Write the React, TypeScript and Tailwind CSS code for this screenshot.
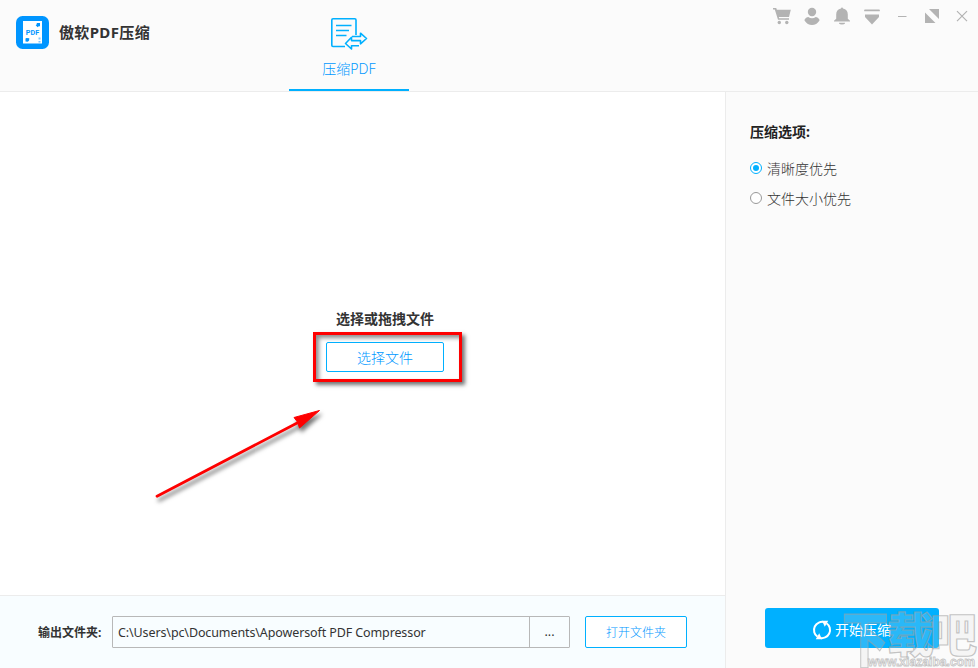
import { useState } from 'react';
import { clsx } from 'clsx';

const OUTPUT_DIR = 'C:\\Users\\pc\\Documents\\Apowersoft PDF Compressor';

const OPTIONS = [
  { id: 'quality', label: '清晰度优先' },
  { id: 'size', label: '文件大小优先' },
];

function Logo() {
  return (
    <svg width="33" height="33" viewBox="0 0 33 33" className="shrink-0">
      <rect width="33" height="33" rx="6.5" fill="#0095ff" />
      <path d="M7 5h19v22.500H7z" fill="#fff" />
      <path d="M20.500 7h3.500v3.500l-1-.5-1.300 1.200-2-1.900 1.300-1.300z" fill="#0095ff" />
      <path d="M9.500 25.500v-3l1-.5 2.800.2-.2 2.300-1.300 1.300z" fill="#0095ff" />
      <path d="M22.500 21.500h2v2h-2zM22.500 25h2v1.500h-2z" fill="#7cc8ff" />
      <text x="16.500" y="19" textAnchor="middle" fontSize="7.200" textLength="13.500" fontWeight="700" fontFamily="Roboto, sans-serif" fill="#0095ff">
        PDF
      </text>
    </svg>
  );
}

function CompressIcon() {
  return (
    <svg width="38" height="34" viewBox="0 0 38 34" fill="none" stroke="#00b0ff" strokeWidth="1.600">
      <path d="M15 29.500H3a1.200 1.200 0 0 1-1.200-1.200V3A1.200 1.200 0 0 1 3 1.800h21.800A1.200 1.200 0 0 1 26 3v15" />
      <path d="M6 8.500h15.500M6 13.500h13M6 18.500h10.500" />
      <path d="M22 19.500h8.500V16.200l6 5.300-6 5.300v-3.200H21.500v-3.400l-6 6.300 6 5.500v-3.200h7.500" strokeLinejoin="round" />
    </svg>
  );
}

function WindowControls() {
  return (
    <div className="flex gap-[10px] pt-[6px] pr-[6px] text-[#b3b3b3]">
      <svg width="20" height="20" viewBox="0 0 20 20" fill="currentColor">
        <path d="M1 2h3.200l.7 1.800H18.800L17 11H6.800l.4 1.300H17v1.500H6L2.800 3.600H1z" />
        <circle cx="7.300" cy="16.500" r="1.700" />
        <circle cx="14.800" cy="16.500" r="1.700" />
      </svg>
      <svg width="20" height="20" viewBox="0 0 20 20" fill="currentColor">
        <circle cx="10" cy="6" r="4.200" />
        <path d="M6.200 11Q10 13.500 13.800 11 17.500 12 17.500 14.500 14.500 19 10 19T2.500 14.500Q2.500 12 6.200 11z" />
      </svg>
      <svg width="20" height="20" viewBox="0 0 20 20" fill="currentColor">
        <path d="M9 2.500a1 1 0 0 1 2 0q4.800.8 4.800 6v4.200l2.200 2v.8H2v-.8l2.200-2V8.500q0-5.200 4.800-6zM7 16.800h6v.8q-.7 1-3 1t-3-1z" />
      </svg>
      <svg width="20" height="20" viewBox="0 0 20 20" fill="currentColor">
        <path d="M3 3.500h14a.9.9 0 0 1 0 1.800H3a.9.9 0 0 1 0-1.800zM3 8.500h14v2.500l-7 7.500L3 11z" />
      </svg>
      <svg width="20" height="20" viewBox="0 0 20 20" fill="currentColor">
        <path d="M6 10h8.500v1H6z" />
      </svg>
      <svg width="20" height="20" viewBox="0 0 20 20" fill="currentColor">
        <path d="M7 3h10v10zM3 6.500V17h10.500z" />
      </svg>
      <svg width="20" height="20" viewBox="0 0 20 20" fill="none" stroke="currentColor" strokeWidth="1.200">
        <path d="M5 5.200l10 10M15 5.200l-10 10" />
      </svg>
    </div>
  );
}

function RefreshIcon() {
  return (
    <svg width="20" height="20" viewBox="0 0 20 20" fill="none" stroke="#fff" strokeWidth="2">
      <path d="M5.500 16.800A8.200 8.200 0 0 1 12.500 2.200" />
      <path d="M14.500 3.200A8.200 8.200 0 0 1 7.500 17.800" />
      <path d="M10 .7h6.200l-3.400 6zM10 19.300H3.800l3.400-6z" fill="#fff" stroke="none" />
    </svg>
  );
}

// Hand-drawn pointer towards the file button
function Arrow() {
  return (
    <svg
      width="180"
      height="104"
      viewBox="150 404 180 104"
      className="pointer-events-none absolute left-[150px] top-[404px] drop-shadow-[2px_4px_2px_rgba(0,0,0,0.55)]"
    >
      <path d="M157 496.200L300 421.500" stroke="#fe0000" strokeWidth="2.800" strokeLinecap="round" />
      <path d="M319.500 410.500L294 417.500l3.500 4.500 2 6z" fill="#fe0000" stroke="#fe0000" strokeLinejoin="round" />
    </svg>
  );
}

function Watermark() {
  return (
    <svg width="138" height="62" viewBox="840 606 138 62" className="pointer-events-none absolute bottom-0 right-0">
      <g fill="#dcdcdc" fillOpacity="0.2" stroke="#a0a0a0" strokeOpacity="0.6">
        <g strokeWidth="1.200" fontWeight="900" fontFamily="'Noto Sans CJK SC', sans-serif">
          <text transform="translate(842 662) scale(0.78 1)" fontSize="60">
            下
          </text>
          <text x="887" y="652" fontSize="47">
            载
          </text>
          <text x="930" y="652" fontSize="47">
            吧
          </text>
        </g>
        <text x="868" y="666" fontSize="13" textLength="107" lengthAdjust="spacingAndGlyphs" strokeWidth="0.900" fontWeight="700" fontFamily="'Liberation Sans', sans-serif" fill="#fff" fillOpacity="0.7">
          www.xiazaiba.com
        </text>
      </g>
    </svg>
  );
}

export default function App() {
  const [mode, setMode] = useState('quality');

  return (
    <div className="relative flex h-[668px] w-[978px] flex-col overflow-hidden bg-[#fbfbfb] font-['Noto_Sans','Noto_Sans_CJK_SC',sans-serif] text-sm text-[#333]">
      {/* Title bar */}
      <header className="flex h-[92px] shrink-0 border-b border-[#ececec]">
        <div className="flex w-[289px] items-start gap-[10px] pl-4 pt-4">
          <Logo />
          <h1 className="text-[15px] font-bold leading-[33px] tracking-[0.35px]">傲软PDF压缩</h1>
        </div>
        <button className="flex h-[91px] w-[120px] flex-col items-center border-b-2 border-[#00b0ff] pt-[17px] font-light text-[#0098ff]">
          <CompressIcon />
          <span className="mt-2 leading-5">压缩PDF</span>
        </button>
        <div className="ml-auto">
          <WindowControls />
        </div>
      </header>

      <div className="flex min-h-0 flex-1">
        <div className="flex w-[725px] flex-col">
          {/* Drop area */}
          <main className="flex flex-1 flex-col items-center bg-white pl-[45px] pt-[217px]">
            <p className="font-bold leading-5">选择或拖拽文件</p>
            <div className="relative mt-[13px]">
              <button className="block h-[30px] w-[118px] rounded-[2px] border border-[#00b0ff] bg-white pt-px font-light text-[#0098ff]">
                选择文件
              </button>
              <span className="pointer-events-none absolute -bottom-[10px] -left-[13px] -right-[18px] -top-[10px] border-[3px] border-[#fe0000] shadow-[3px_3px_4px_rgba(0,0,0,0.55),inset_3px_3px_4px_rgba(0,0,0,0.45)]" />
            </div>
          </main>

          {/* Output folder */}
          <footer className="flex h-[73px] shrink-0 items-center border-t border-[#ececec] bg-[#f8fdff] pl-[38px] text-xs">
            <span className="w-[74px] pt-px font-bold">输出文件夹:</span>
            <div className="flex h-8 w-[458px] rounded-[1px] border border-[#b8b8b8] text-[12.5px]">
              <span className="flex-1 whitespace-nowrap pl-[5px] leading-[32px] tracking-[-0.11px]">{OUTPUT_DIR}</span>
              <button className="w-10 border-l border-[#b8b8b8]">...</button>
            </div>
            <button className="ml-[15px] h-8 w-[102px] rounded-[2px] border border-[#00b0ff] bg-white pt-px font-light text-[#0098ff]">
              打开文件夹
            </button>
          </footer>
        </div>

        {/* Options */}
        <aside className="flex flex-1 flex-col border-l border-[#ececec] pl-6">
          <h2 className="mt-[30px] font-bold leading-5 text-[#222]">压缩选项:</h2>
          <div className="mt-[17px] flex flex-col gap-[10px] font-light text-[#333]">
            {OPTIONS.map((option) => (
              <label key={option.id} className="flex h-5 items-center gap-[5px]" onClick={() => setMode(option.id)}>
                <span
                  className={clsx(
                    'mb-[2px] flex size-3 items-center justify-center rounded-full border bg-white',
                    mode === option.id ? 'border-[#00b0ff]' : 'border-[#999]'
                  )}
                >
                  {mode === option.id && <span className="size-1.5 rounded-full bg-[#00b0ff]" />}
                </span>
                {option.label}
              </label>
            ))}
          </div>
          <button className="mb-5 ml-[15px] mt-auto flex h-10 w-[174px] items-center justify-center gap-[3px] rounded-[3px] bg-[#00b0ff] pr-px pt-1 text-white">
            <RefreshIcon />
            开始压缩
          </button>
        </aside>
      </div>

      <Arrow />
      <Watermark />
    </div>
  );
}
